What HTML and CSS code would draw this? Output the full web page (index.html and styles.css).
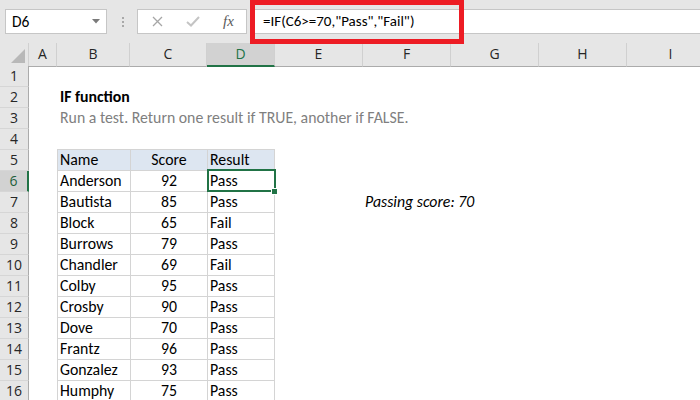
FILE: index.html
```html
<!DOCTYPE html>
<html>
<head>
<meta charset="utf-8">
<link rel="stylesheet" href="styles.css">
</head>
<body>
<div class="app">
  <div class="fbar">
    <div class="namebox">
      <span>D6</span>
      <svg class="dd" width="8" height="5" viewBox="0 0 8 5"><path d="M0 0H8L4 4.5Z" fill="#7a7a7a"/></svg>
    </div>
    <div class="grip"><i></i><i></i><i></i></div>
    <div class="fxbox">
      <svg class="ic-x" width="11" height="11" viewBox="0 0 11 11"><path d="M1 1L10 10M10 1L1 10" stroke="#a6a6a6" stroke-width="1.3" fill="none"/></svg>
      <svg class="ic-ok" width="14" height="11" viewBox="0 0 14 11"><path d="M1 6L5 9.5L13 1" stroke="#c4c4c4" stroke-width="2" fill="none"/></svg>
      <span class="fx">fx</span>
    </div>
    <div class="formula">=IF(C6&gt;=70,"Pass","Fail")</div>
  </div>
  <div class="callout"></div>

  <div class="sheet">
    <div class="row hdr">
      <div class="corner"><svg width="14" height="14" viewBox="0 0 14 14"><path d="M14 0V14H0Z" fill="#b8b8b8"/></svg></div>
      <div class="ch">A</div><div class="ch">B</div><div class="ch">C</div><div class="ch sel">D</div><div class="ch">E</div><div class="ch">F</div><div class="ch">G</div><div class="ch">H</div><div class="ch">I</div>
    </div>
    <div class="row"><div class="rh">1</div></div>
    <div class="row"><div class="rh">2</div><div class="c"></div><div class="c title">IF function</div></div>
    <div class="row"><div class="rh">3</div><div class="c"></div><div class="c sub">Run a test. Return one result if TRUE, another if FALSE.</div></div>
    <div class="row"><div class="rh">4</div><div class="c"></div><div class="c top"></div><div class="c top"></div><div class="c top"></div></div>
    <div class="row"><div class="rh">5</div><div class="c"></div><div class="c t th">Name</div><div class="c t th ctr">Score</div><div class="c t th last">Result</div></div>
    <div class="row"><div class="rh sel">6</div><div class="c"></div><div class="c t">Anderson</div><div class="c t ctr">92</div><div class="c t last active">Pass</div></div>
    <div class="row"><div class="rh">7</div><div class="c"></div><div class="c t">Bautista</div><div class="c t ctr">85</div><div class="c t last">Pass</div><div class="c"></div><div class="c note">Passing score: 70</div></div>
    <div class="row"><div class="rh">8</div><div class="c"></div><div class="c t">Block</div><div class="c t ctr">65</div><div class="c t last">Fail</div></div>
    <div class="row"><div class="rh">9</div><div class="c"></div><div class="c t">Burrows</div><div class="c t ctr">79</div><div class="c t last">Pass</div></div>
    <div class="row"><div class="rh">10</div><div class="c"></div><div class="c t">Chandler</div><div class="c t ctr">69</div><div class="c t last">Fail</div></div>
    <div class="row"><div class="rh">11</div><div class="c"></div><div class="c t">Colby</div><div class="c t ctr">95</div><div class="c t last">Pass</div></div>
    <div class="row"><div class="rh">12</div><div class="c"></div><div class="c t">Crosby</div><div class="c t ctr">90</div><div class="c t last">Pass</div></div>
    <div class="row"><div class="rh">13</div><div class="c"></div><div class="c t">Dove</div><div class="c t ctr">70</div><div class="c t last">Pass</div></div>
    <div class="row"><div class="rh">14</div><div class="c"></div><div class="c t">Frantz</div><div class="c t ctr">96</div><div class="c t last">Pass</div></div>
    <div class="row"><div class="rh">15</div><div class="c"></div><div class="c t">Gonzalez</div><div class="c t ctr">93</div><div class="c t last">Pass</div></div>
    <div class="row"><div class="rh">16</div><div class="c"></div><div class="c t">Humphy</div><div class="c t ctr">75</div><div class="c t last">Pass</div></div>
  </div>
</div>
</body>
</html>
```

FILE: styles.css
```css
html, body {
  margin: 0;
  padding: 0;
  background: #fff;
}

body {
  font-family: Carlito, Calibri, Lato, "Liberation Sans", sans-serif;
  color: #000;
}

.app {
  position: relative;
  width: 700px;
  height: 400px;
  overflow: hidden;
}

/* ---------- formula bar ---------- */
.fbar {
  height: 43px;
  box-sizing: border-box;
  padding-top: 9px;
  background: #e6e6e6;
  display: flex;
  align-items: flex-start;
}

.namebox {
  margin-left: 5px;
  width: 102px;
  height: 25px;
  box-sizing: border-box;
  border: 1px solid #c6c6c6;
  background: #fff;
  display: flex;
  align-items: center;
  justify-content: space-between;
  padding: 0 6px 0 6px;
  font-size: 15.5px;
}

.grip {
  margin: 8px 13px 0 15px;
  width: 2px;
  display: flex;
  flex-direction: column;
  gap: 2px;
}

.grip i {
  display: block;
  width: 2px;
  height: 2px;
  background: #a8a8a8;
}

.fxbox {
  width: 110px;
  height: 25px;
  box-sizing: border-box;
  border: 1px solid #c6c6c6;
  background: #fff;
  display: flex;
  align-items: center;
  padding-left: 14px;
}

.ic-ok {
  margin-left: 23px;
}

.fx {
  margin-left: 23px;
  font-family: "Liberation Serif", serif;
  font-style: italic;
  font-size: 15px;
  color: #5a5a5a;
}

.formula {
  flex: 1;
  margin-left: 3px;
  height: 25px;
  box-sizing: border-box;
  border: 1px solid #c6c6c6;
  border-right: none;
  background: #fff;
  padding-left: 12px;
  font-size: 15px;
  line-height: 23px;
  white-space: nowrap;
}

.callout {
  position: absolute;
  left: 250px;
  top: 0;
  width: 214px;
  height: 44px;
  box-sizing: border-box;
  border: 5px solid #ed1c24;
  z-index: 5;
}

/* ---------- sheet ---------- */
.row {
  display: grid;
  grid-template-columns: 29px 28px 73px 77px 68px 88px 88px 88px 88px 88px;
  height: 21px;
  font-size: 15.8px;
  line-height: 20px;
}

.row.hdr {
  height: 23px;
}

.corner {
  background: #e6e6e6;
  border-right: 1px solid #d0d0d0;
  border-bottom: 1px solid #ababab;
  box-sizing: border-box;
  display: flex;
  align-items: flex-end;
  justify-content: flex-end;
  padding: 0 3px 3px 0;
}

.ch {
  background: #e6e6e6;
  border-right: 1px solid #d0d0d0;
  border-bottom: 1px solid #ababab;
  box-sizing: border-box;
  text-align: center;
  font-family: "Open Sans", "Noto Sans", sans-serif;
  font-size: 14px;
  line-height: 22px;
  color: #262626;
}

.ch.sel {
  background: #d2d2d2;
  color: #217346;
  border-bottom: 2px solid #217346;
}

.rh {
  background: #e6e6e6;
  border-right: 1px solid #ababab;
  border-bottom: 1px solid #d6d6d6;
  box-sizing: border-box;
  text-align: center;
  font-family: "Open Sans", "Noto Sans", sans-serif;
  font-size: 14px;
  line-height: 20px;
  color: #262626;
}

.rh.sel {
  background: #d2d2d2;
  color: #1f5f3b;
  border-right: 2px solid #217346;
}

.c {
  box-sizing: border-box;
  padding: 0 2px;
  white-space: nowrap;
  position: relative;
}

.title {
  font-weight: bold;
  padding-left: 3px;
}

.sub {
  color: #7f7f7f;
  padding-left: 3px;
}

.top {
  border-bottom: 1px solid #d4d4d4;
}

.t {
  border-left: 1px solid #d4d4d4;
  border-bottom: 1px solid #d4d4d4;
}

.t.last {
  border-right: 1px solid #d4d4d4;
}

.th {
  background: #dde6f1;
}

.ctr {
  text-align: center;
}

.active::after {
  content: "";
  position: absolute;
  left: -1px;
  right: -2px;
  top: -2px;
  bottom: -1px;
  border: 2px solid #217346;
}

.active::before {
  content: "";
  position: absolute;
  right: -4px;
  bottom: -4px;
  width: 5px;
  height: 5px;
  background: #217346;
  border: 1px solid #fff;
  z-index: 2;
}

.note {
  font-style: italic;
  padding-left: 2px;
}
```
